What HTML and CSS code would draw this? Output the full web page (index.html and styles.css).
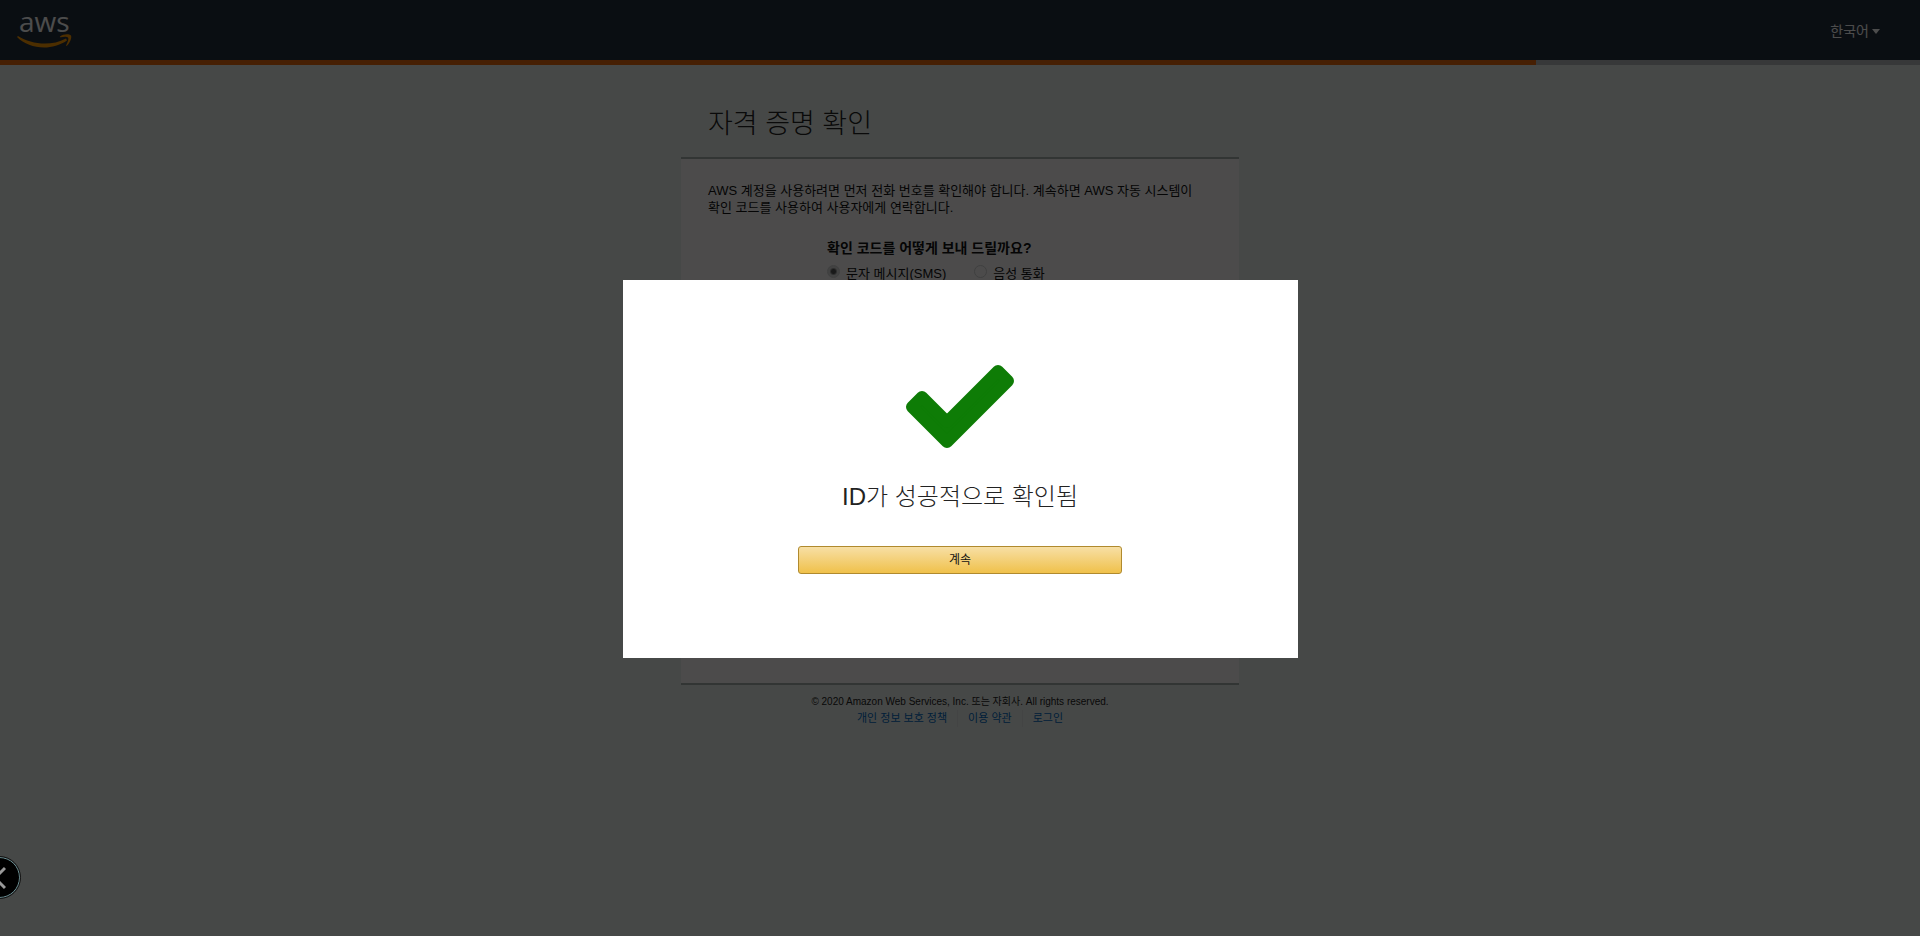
FILE: index.html
```html
<!DOCTYPE html>
<html lang="ko">
<head>
<meta charset="utf-8">
<title>자격 증명 확인</title>
<link rel="stylesheet" href="styles.css">
</head>
<body>
<header class="topbar">
  <a class="logo" href="#" aria-label="aws">
    <svg width="60" height="56" viewBox="0 0 60 56">
      <text class="logo-text" x="2" y="30">aws</text>
      <path class="logo-smile" d="M1 34C14 42 33 45 49 36.500L50 38.500C34 49.500 12 47 0 35Z"/>
      <path class="logo-smile" d="M43 34.500C46 32 52 31.500 54 33.500C55 35.500 53 41.500 49.500 44C49 44 49 43.500 49.500 42.500C51 39.500 52 36.500 51 35.500C50 34.500 47 34.500 44 35.200C43 35.500 42.500 35 43 34.500Z"/>
    </svg>
  </a>
  <button class="language" type="button">한국어<svg class="caret" width="8" height="5" viewBox="0 0 8 5"><path d="M0 0H8L4 5Z"/></svg></button>
</header>
<div class="progress"><div class="progress-value"></div></div>
<main class="page">
  <h1 class="title">자격 증명 확인</h1>
  <section class="card">
    <p class="intro">AWS 계정을 사용하려면 먼저 전화 번호를 확인해야 합니다. 계속하면 AWS 자동 시스템이 확인 코드를 사용하여 사용자에게 연락합니다.</p>
    <fieldset class="method">
      <legend class="method-title">확인 코드를 어떻게 보내 드릴까요?</legend>
      <div class="options">
        <label class="option"><input class="radio" type="radio" name="method" checked>문자 메시지(SMS)</label>
        <label class="option"><input class="radio" type="radio" name="method">음성 통화</label>
      </div>
    </fieldset>
  </section>
  <footer class="footer">
    <p class="copyright">© 2020 Amazon Web Services, Inc. 또는 자회사. All rights reserved.</p>
    <nav class="links">
      <a class="link" href="#">개인 정보 보호 정책</a>
      <a class="link" href="#">이용 약관</a>
      <a class="link" href="#">로그인</a>
    </nav>
  </footer>
</main>
<div class="overlay">
  <div class="dialog" role="dialog" aria-modal="true" aria-labelledby="dialog-title">
    <svg class="check" width="110" height="84" viewBox="0 0 110 84"><path d="M7 42L17 32L42 57L93 6L103 16L42 77Z"/></svg>
    <h2 class="dialog-title" id="dialog-title">ID가 성공적으로 확인됨</h2>
    <button class="continue" type="button">계속</button>
  </div>
</div>
<button class="drawer" type="button" aria-label="열기">
  <svg width="12" height="24" viewBox="0 0 12 24"><path d="M11 2L1 12L11 22"/></svg>
</button>
</body>
</html>
```
FILE: styles.css
```css
* { box-sizing: border-box; }
body {
  margin: 0;
  min-height: 100vh;
  background: #ecf2ee;
  color: #111;
  font-family: "Liberation Sans", "Noto Sans CJK KR", sans-serif;
  font-size: 13px;
  line-height: 17px;
}
h1, h2, p { margin: 0; }
.topbar {
  display: flex;
  align-items: center;
  justify-content: space-between;
  height: 60px;
  padding: 0 40px 0 17px;
  background: #232f3e;
}
.logo { display: flex; }
.logo-text {
  fill: #fff;
  font-family: "Open Sans", sans-serif;
  font-size: 28px;
  font-weight: 500;
}
.logo-smile { fill: #f90; }
.language {
  display: flex;
  align-items: center;
  gap: 3px;
  padding: 2px 0 0;
  border: 0;
  background: none;
  color: #fff;
  font: inherit;
  font-size: 14px;
}
.caret { fill: #fff; }
.progress { height: 5px; background: #b9bdbf; }
.progress-value { width: 80%; height: 100%; background: #ec6a0c; }
.page { max-width: 558px; margin: 0 auto; }
.title {
  padding: 39px 27px 13px;
  color: #222;
  font-size: 27px;
  line-height: 40px;
  font-weight: 300;
}
.card {
  min-height: 528px;
  padding: 23px 27px;
  border: solid #a9b1af;
  border-width: 2px 0;
  background: #fdfcfc;
}
.intro { word-break: keep-all; }
.method {
  margin: 24px 0 0;
  padding: 0 0 0 119px;
  border: 0;
}
.method-title { padding: 0; font-size: 14px; font-weight: 700; }
.options { display: flex; gap: 28px; padding-top: 8px; }
.option { display: flex; align-items: center; gap: 6px; }
.radio {
  appearance: none;
  width: 13px;
  height: 13px;
  margin: 0 0 4px;
  border: 1px solid #d4d4d4;
  border-radius: 50%;
}
.radio:checked { background: radial-gradient(circle, #555 0 2px, #ddd 4px); }
.footer {
  padding-top: 8px;
  color: #222;
  text-align: center;
  font-size: 10px;
}
.links { display: flex; justify-content: center; }
.link {
  padding: 0 10px;
  color: #0068c0;
  font-size: 11px;
  text-decoration: none;
}
.link + .link { border-left: 1px solid #e2e5e3; }
.drawer {
  position: fixed;
  bottom: 38px;
  left: -21px;
  display: flex;
  align-items: center;
  justify-content: flex-end;
  width: 41px;
  height: 41px;
  padding: 0 13px 0 0;
  border: 1px solid #6b9196;
  border-radius: 50%;
  outline: 1px solid #111;
  background: #000;
}
.drawer path { fill: none; stroke: #999; stroke-width: 3; }
.overlay {
  position: fixed;
  inset: 0;
  display: flex;
  align-items: center;
  justify-content: center;
  padding-top: 2px;
  background: rgba(0, 0, 0, 0.7);
}
.dialog {
  display: flex;
  flex-direction: column;
  align-items: center;
  width: 675px;
  max-width: 100%;
  padding: 85px 0 84px;
  background: #fff;
}
.check path {
  fill: #0e7c06;
  stroke: #0e7c06;
  stroke-width: 12;
  stroke-linejoin: round;
}
.dialog-title {
  padding: 28px 0 29px;
  color: #222;
  font-size: 24px;
  line-height: 40px;
  font-weight: 300;
}
.continue {
  width: 48%;
  height: 28px;
  padding: 0;
  border: 1px solid #b08a2e;
  border-radius: 3px;
  background: linear-gradient(#f7dfa5, #f0c14b);
  color: #111;
  font: inherit;
  font-size: 12px;
}
```
